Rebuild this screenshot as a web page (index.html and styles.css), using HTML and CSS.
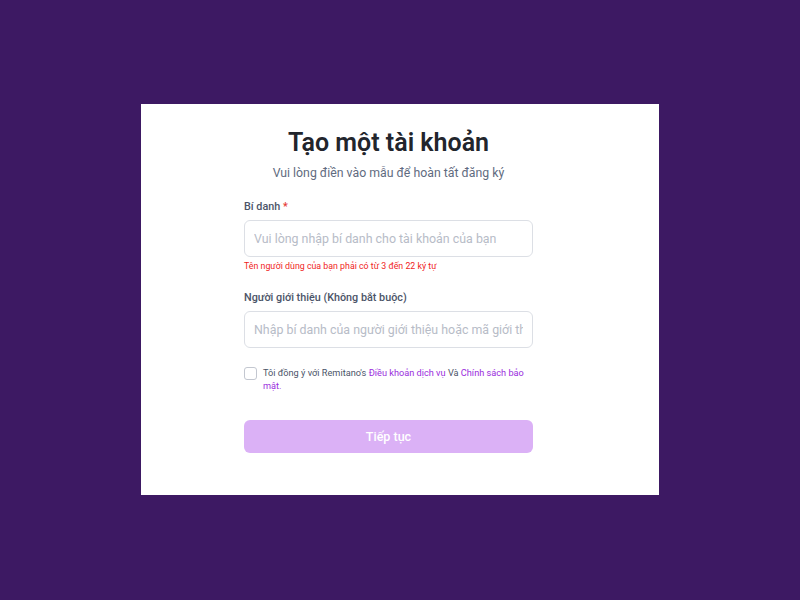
FILE: index.html
```html
<!DOCTYPE html>
<html>
<head>
    <meta charset="utf-8">
    <link rel="stylesheet" href="styles.css">
</head>
<body>
<div class="card">
    <h1 class="title">Tạo một tài khoản</h1>
    <p class="subtitle">Vui lòng điền vào mẫu để hoàn tất đăng ký</p>
    <form class="form">
        <label class="label">Bí danh <span class="req">*</span></label>
        <input class="field" type="text" placeholder="Vui lòng nhập bí danh cho tài khoản của bạn">
        <div class="error">Tên người dùng của bạn phải có từ 3 đến 22 ký tự</div>

        <label class="label label2">Người giới thiệu (Không bắt buộc)</label>
        <input class="field" type="text" placeholder="Nhập bí danh của người giới thiệu hoặc mã giới thiệu">

        <div class="agree">
            <span class="box"></span>
            <p class="agree-text">Tôi đồng ý với Remitano's <a href="#">Điều khoản dịch vụ</a> Và <a href="#">Chính sách bảo mật.</a></p>
        </div>

        <button class="submit" type="button">Tiếp tục</button>
    </form>
</div>
</body>
</html>
```

FILE: styles.css
```css
html, body {
    margin: 0;
    height: 100%;
}

body {
    background-color: #3d1963;
    font-family: Roboto, "Noto Sans", sans-serif;
    padding-top: 104px;
    box-sizing: border-box;
}

.card {
    width: 518px;
    height: 391px;
    margin: 0 0 0 141px;
    background-color: #ffffff;
    box-sizing: border-box;
    padding: 23px 23px 0 0;
}

.title {
    margin: 0;
    text-align: center;
    font-size: 25px;
    font-weight: 600;
    color: #22252c;
    line-height: 32px;
}

.subtitle {
    margin: 4px 0 0 0;
    text-align: center;
    font-size: 12.3px;
    color: #5f6b80;
    line-height: 20px;
}

.form {
    width: 289px;
    margin: 16px 0 0 103px;
    display: flex;
    flex-direction: column;
}

.label {
    display: block;
    height: 16px;
    font-size: 10.8px;
    font-weight: 500;
    color: #4b5468;
    line-height: 16px;
}

.req {
    color: #e53935;
}

.label2 {
    margin-top: 17px;
}

.field {
    margin-top: 5px;
    height: 37px;
    box-sizing: border-box;
    border: 1px solid #dcdfe5;
    border-radius: 6px;
    padding: 0 9px;
    font-family: inherit;
    font-size: 12.4px;
    color: #333;
    outline: none;
}

.field::placeholder {
    color: #b7bcc7;
}

.error {
    margin-top: 2px;
    height: 14px;
    font-size: 8.8px;
    color: #f01d1d;
    line-height: 14px;
}

.agree {
    margin-top: 18px;
    display: flex;
    gap: 6px;
    align-items: flex-start;
}

.box {
    flex: none;
    width: 11px;
    height: 11px;
    margin-top: 1px;
    border: 1px solid #c3c7d0;
    border-radius: 3px;
}

.agree-text {
    margin: 0;
    font-size: 9.2px;
    color: #4b5468;
    line-height: 13px;
}

.agree-text a {
    color: #9a2ddd;
    text-decoration: none;
}

.submit {
    margin-top: 28px;
    height: 33px;
    border: none;
    border-radius: 6px;
    background-color: #dbb1f6;
    color: #ffffff;
    font-family: inherit;
    font-size: 12.5px;
    font-weight: 500;
}
```
